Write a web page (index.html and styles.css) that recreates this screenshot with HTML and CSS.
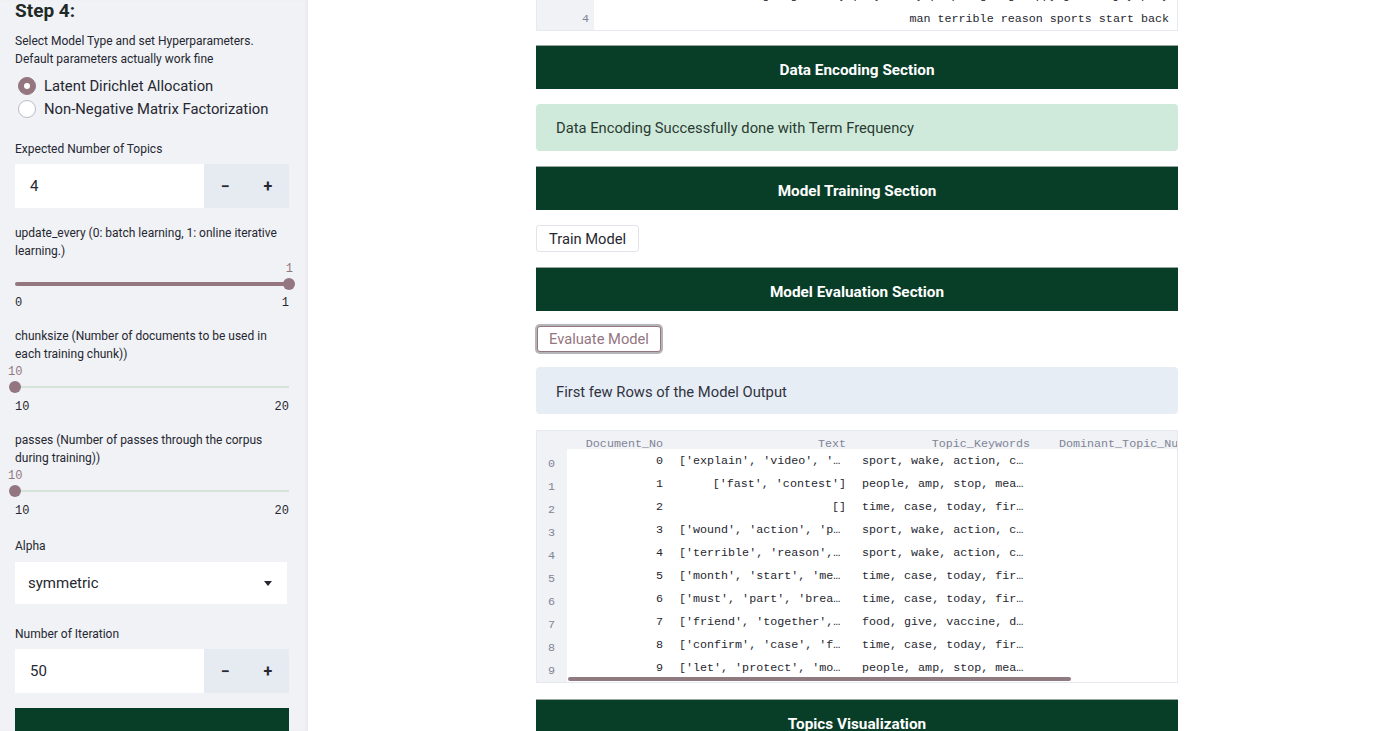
FILE: index.html
```html
<!DOCTYPE html>
<html>
<head>
<meta charset="utf-8">
<link rel="stylesheet" href="styles.css">
</head>
<body>
<aside class="sidebar">
  <h2 class="step">Step 4:</h2>
  <p class="desc">Select Model Type and set Hyperparameters.<br>Default parameters actually work fine</p>
  <div class="radios">
    <div class="radio"><span class="dot on"></span><span>Latent Dirichlet Allocation</span></div>
    <div class="radio"><span class="dot"></span><span>Non-Negative Matrix Factorization</span></div>
  </div>

  <div class="lbl lbl-topics">Expected Number of Topics</div>
  <div class="numin">
    <div class="numval">4</div>
    <div class="numbtns"><span class="nb">&minus;</span><span class="nb">+</span></div>
  </div>

  <div class="lbl lbl-upd">update_every (0: batch learning, 1: online iterative learning.)</div>
  <div class="slider">
    <div class="sval right">1</div>
    <div class="track full"><span class="thumb thumb-end"></span></div>
    <div class="ticks"><span>0</span><span>1</span></div>
  </div>

  <div class="lbl lbl-gap">chunksize (Number of documents to be used in each training chunk))</div>
  <div class="slider">
    <div class="sval">10</div>
    <div class="track"><span class="thumb thumb-start"></span></div>
    <div class="ticks"><span>10</span><span>20</span></div>
  </div>

  <div class="lbl lbl-gap">passes (Number of passes through the corpus during training))</div>
  <div class="slider">
    <div class="sval">10</div>
    <div class="track"><span class="thumb thumb-start"></span></div>
    <div class="ticks"><span>10</span><span>20</span></div>
  </div>

  <div class="lbl lbl-alpha">Alpha</div>
  <div class="select"><span>symmetric</span><span class="caret"></span></div>

  <div class="lbl lbl-iter">Number of Iteration</div>
  <div class="numin">
    <div class="numval">50</div>
    <div class="numbtns"><span class="nb">&minus;</span><span class="nb">+</span></div>
  </div>

  <div class="sidebtn"></div>
</aside>

<main class="main">
  <div class="content">
    <div class="toptable">
      <div class="trow"><div class="tidx">3</div><div class="tcell">going really play today people going happy just enjoy play</div></div>
      <div class="trow"><div class="tidx">4</div><div class="tcell">man terrible reason sports start back</div></div>
    </div>

    <div class="section first">Data Encoding Section</div>
    <div class="alert success">Data Encoding Successfully done with Term Frequency</div>

    <div class="section">Model Training Section</div>
    <div class="btnrow"><button class="btn">Train Model</button></div>

    <div class="section">Model Evaluation Section</div>
    <div class="btnrow"><button class="btn focused">Evaluate Model</button></div>

    <div class="alert info">First few Rows of the Model Output</div>

    <div class="df">
      <div class="df-head">
        <div class="c-idx"></div>
        <div class="c-doc">Document_No</div>
        <div class="c-text">Text</div>
        <div class="c-kw hr">Topic_Keywords</div>
        <div class="c-dom">Dominant_Topic_Nu</div>
      </div>
      <div class="df-body">
        <div class="df-row"><div class="c-idx">0</div><div class="c-doc">0</div><div class="c-text tr">['explain', 'video', '…</div><div class="c-kw">sport, wake, action, c…</div></div>
        <div class="df-row"><div class="c-idx">1</div><div class="c-doc">1</div><div class="c-text">['fast', 'contest']</div><div class="c-kw">people, amp, stop, mea…</div></div>
        <div class="df-row"><div class="c-idx">2</div><div class="c-doc">2</div><div class="c-text">[]</div><div class="c-kw">time, case, today, fir…</div></div>
        <div class="df-row"><div class="c-idx">3</div><div class="c-doc">3</div><div class="c-text tr">['wound', 'action', 'p…</div><div class="c-kw">sport, wake, action, c…</div></div>
        <div class="df-row"><div class="c-idx">4</div><div class="c-doc">4</div><div class="c-text tr">['terrible', 'reason',…</div><div class="c-kw">sport, wake, action, c…</div></div>
        <div class="df-row"><div class="c-idx">5</div><div class="c-doc">5</div><div class="c-text tr">['month', 'start', 'me…</div><div class="c-kw">time, case, today, fir…</div></div>
        <div class="df-row"><div class="c-idx">6</div><div class="c-doc">6</div><div class="c-text tr">['must', 'part', 'brea…</div><div class="c-kw">time, case, today, fir…</div></div>
        <div class="df-row"><div class="c-idx">7</div><div class="c-doc">7</div><div class="c-text tr">['friend', 'together',…</div><div class="c-kw">food, give, vaccine, d…</div></div>
        <div class="df-row"><div class="c-idx">8</div><div class="c-doc">8</div><div class="c-text tr">['confirm', 'case', 'f…</div><div class="c-kw">time, case, today, fir…</div></div>
        <div class="df-row"><div class="c-idx">9</div><div class="c-doc">9</div><div class="c-text tr">['let', 'protect', 'mo…</div><div class="c-kw">people, amp, stop, mea…</div></div>
        <div class="hscroll"></div>
      </div>
    </div>

    <div class="section">Topics Visualization</div>
  </div>
</main>
</body>
</html>
```

FILE: styles.css
```css
* { box-sizing: border-box; }
html, body { margin: 0; padding: 0; }
body {
  display: flex;
  width: 1400px;
  height: 731px;
  overflow: hidden;
  background: #ffffff;
  font-family: Roboto, "Noto Sans", sans-serif;
  color: #262730;
}

/* ---------- sidebar ---------- */
.sidebar {
  width: 308px;
  flex: none;
  height: 731px;
  overflow: hidden;
  background: #f0f2f6;
  padding: 0 19px 0 15px;
  box-shadow: inset -2px 0 3px rgba(0,0,0,0.03);
}
.step {
  margin: 0;
  font-size: 19px;
  line-height: 22px;
  font-weight: 700;
  color: #1f2a26;
}
.desc {
  margin: 10px 0 0;
  font-size: 12px;
  line-height: 18px;
}
.radios { margin-top: 6px; }
.radio {
  display: flex;
  align-items: center;
  height: 23px;
  font-size: 14.8px;
  color: #262730;
}
.dot {
  width: 18px;
  height: 18px;
  border-radius: 50%;
  background: #fff;
  border: 1px solid #b9bcc3;
  margin: 0 8px 0 3px;
  flex: none;
  position: relative;
}
.dot.on {
  background: #93767f;
  border-color: #93767f;
}
.dot.on::after {
  content: "";
  position: absolute;
  left: 5px; top: 5px;
  width: 6px; height: 6px;
  border-radius: 50%;
  background: #fff;
}

.lbl {
  font-size: 12px;
  line-height: 18px;
  color: #262730;
}
.lbl-topics { margin-top: 20px; }
.lbl-upd { margin-top: 16px; }
.lbl-gap { margin-top: 17px; }
.lbl-alpha { margin-top: 19px; }
.lbl-iter { margin-top: 21px; }

.numin {
  display: flex;
  height: 44px;
  margin-top: 6px;
  width: 274px;
}
.numval {
  flex: 1;
  background: #fff;
  font-size: 15px;
  display: flex;
  align-items: center;
  padding-left: 15px;
}
.numbtns {
  width: 85px;
  background: #e6ebf2;
  display: flex;
}
.nb {
  flex: 1;
  display: flex;
  align-items: center;
  justify-content: center;
  font-size: 16px;
  font-weight: 700;
  color: #262730;
}

.slider { margin-top: 2px; }
.sval {
  font-family: "Liberation Mono", "DejaVu Sans Mono", monospace;
  font-size: 12px;
  line-height: 14px;
  color: #93767f;
  margin-left: -7px;
}
.sval.right { text-align: right; margin-left: 0; margin-right: -4px; }
.track {
  position: relative;
  height: 2px;
  margin: 7px 0 12px;
  background: #d4e4da;
  width: 274px;
}
.track.full {
  height: 4px;
  margin: 6px 0 10px;
  background: #93767f;
  border-radius: 2px;
}
.thumb {
  position: absolute;
  width: 12px;
  height: 12px;
  border-radius: 50%;
  background: #93767f;
  top: 50%;
  transform: translateY(-50%);
}
.thumb-start { left: -6px; }
.thumb-end { right: -6px; }
.ticks {
  display: flex;
  justify-content: space-between;
  font-family: "Liberation Mono", "DejaVu Sans Mono", monospace;
  font-size: 12px;
  line-height: 14px;
  color: #262730;
}

.select {
  margin-top: 7px;
  width: 272px;
  height: 42px;
  background: #fff;
  display: flex;
  align-items: center;
  justify-content: space-between;
  padding: 0 15px 0 13px;
  font-size: 15px;
}
.caret {
  width: 0; height: 0;
  border-left: 4px solid transparent;
  border-right: 4px solid transparent;
  border-top: 5px solid #262730;
}
.sidebtn {
  margin-top: 15px;
  width: 274px;
  height: 40px;
  background: #083d28;
}

/* ---------- main ---------- */
.main {
  flex: 1;
  height: 731px;
  overflow: hidden;
}
.content {
  width: 642px;
  margin-left: 228px;
  margin-top: -16px;
}
.toptable {
  border: 1px solid #e6e9ef;
  border-top: none;
  font-family: "Liberation Mono", "DejaVu Sans Mono", monospace;
  font-size: 11.7px;
}
.trow {
  display: flex;
  height: 23px;
  align-items: center;
}
.tidx {
  width: 57px;
  height: 100%;
  background: #f0f2f6;
  color: #808495;
  padding-right: 5px;
  display: flex;
  align-items: center;
  justify-content: flex-end;
}
.tcell {
  flex: 1;
  text-align: right;
  padding-right: 8px;
  color: #262730;
  white-space: nowrap;
  overflow: hidden;
}

.section {
  height: 44px;
  background: #083d28;
  color: #fff;
  font-weight: 700;
  font-size: 15.3px;
  display: flex;
  align-items: center;
  justify-content: center;
  padding-top: 4px;
  border-top: 1px solid #9aa7a0;
  margin-top: 15px;
}
.section.first { margin-top: 14px; }
.alert {
  margin-top: 15px;
  height: 47px;
  border-radius: 4px;
  padding-left: 20px;
  display: flex;
  align-items: center;
  font-size: 14.75px;
}
.success { background: #cfeadb; color: #2a3a31; }
.info { background: #e6edf5; color: #31333f; padding-top: 2px; }

.btnrow { margin-top: 15px; display: flex; }
.btn {
  height: 27px;
  padding: 0 12px;
  background: #fff;
  border: 1px solid #e1e4ea;
  border-radius: 3px;
  font-family: Roboto, "Noto Sans", sans-serif;
  font-size: 14.7px;
  color: #262730;
}
.btn.focused {
  border: 1px solid #93767f;
  box-shadow: 0 0 0 2px rgba(120,120,128,0.55);
  color: #93767f;
  margin-left: 1px;
  height: 26px;
  width: 124px;
  padding: 0;
}

.df {
  margin-top: 16px;
  width: 642px;
  border: 1px solid #e6e9ef;
  overflow: hidden;
  font-family: "Liberation Mono", "DejaVu Sans Mono", monospace;
  font-size: 11.7px;
  background: #f0f2f6;
}
.df-head {
  display: flex;
  height: 23px;
  align-items: center;
  color: #808495;
  white-space: nowrap;
  padding-top: 3px;
}
.df-body {
  position: relative;
  background: #fff;
  margin-left: 30px;
  margin-top: -5px;
  height: 233px;
}
.df-row {
  display: flex;
  height: 23px;
  align-items: center;
  white-space: nowrap;
  color: #262730;
  margin-left: -30px;
}
.c-idx {
  width: 30px;
  flex: none;
  color: #808495;
  padding-left: 11px;
  align-self: stretch;
  background: #f0f2f6;
  padding-top: 8px;
}
.df-head .c-idx { padding-top: 0; }
.c-doc { width: 104px; flex: none; text-align: right; padding-right: 8px; }
.c-text { width: 183px; flex: none; text-align: right; padding-right: 8px; overflow: hidden; }
.c-text.tr { text-align: left; padding-left: 8px; padding-right: 0; }
.c-kw { width: 184px; flex: none; padding-left: 8px; overflow: hidden; }
.c-kw.hr { text-align: right; padding-right: 8px; padding-left: 0; }
.c-dom { padding-left: 21px; flex: none; }
.hscroll {
  position: absolute;
  left: 1px;
  top: 228px;
  width: 503px;
  height: 4px;
  border-radius: 2px;
  background: #8f7a80;
}
.df + .section { margin-top: 16px; }
```
